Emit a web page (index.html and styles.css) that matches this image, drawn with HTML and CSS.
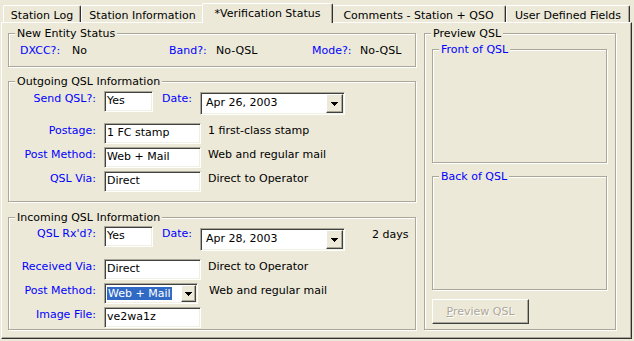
FILE: index.html
```html
<!DOCTYPE html>
<html lang="en">
<head>
<meta charset="UTF-8">
<title>Verification Status</title>
<link rel="stylesheet" href="styles.css">
</head>
<body>

<div class="window">
  <div class="tabs">
    <div class="tab tab-log">Station Log</div>
    <div class="tab tab-info">Station Information</div>
    <div class="tab tab-verify">*Verification Status</div>
    <div class="tab tab-comments">Comments - Station + QSO</div>
    <div class="tab tab-user">User Defined Fields</div>
  </div>

  <div class="panel">
    <div class="left-col">

      <!-- New entity status -->
      <div class="group g-entity">
        <div class="group-title">New Entity Status</div>
        <div class="entity-row">
          <span class="blue">DXCC?:</span><span>No</span>
          <span class="blue">Band?:</span><span>No-QSL</span>
          <span class="blue">Mode?:</span><span>No-QSL</span>
        </div>
      </div>

      <!-- Outgoing -->
      <div class="group g-out">
        <div class="group-title">Outgoing QSL Information</div>
        <div class="form-row first">
          <div class="row-label">Send QSL?:</div>
          <div class="field short">Yes</div>
          <div class="date-label">Date:</div>
          <div class="combo combo-date">
            <div class="combo-text">Apr 26, 2003</div>
            <div class="drop"><svg width="7" height="4" viewBox="0 0 7 4"><path d="M0 0H7V1H6V2H5V3H4V4H3V3H2V2H1V1H0Z"/></svg></div>
          </div>
        </div>
        <div class="form-row second">
          <div class="row-label">Postage:</div>
          <div class="field">1 FC stamp</div>
          <div class="desc">1 first-class stamp</div>
        </div>
        <div class="form-row">
          <div class="row-label">Post Method:</div>
          <div class="field">Web + Mail</div>
          <div class="desc">Web and regular mail</div>
        </div>
        <div class="form-row">
          <div class="row-label">QSL Via:</div>
          <div class="field">Direct</div>
          <div class="desc">Direct to Operator</div>
        </div>
      </div>

      <!-- Incoming -->
      <div class="group g-in">
        <div class="group-title">Incoming QSL Information</div>
        <div class="form-row first in-first">
          <div class="row-label">QSL Rx'd?:</div>
          <div class="field short">Yes</div>
          <div class="date-label">Date:</div>
          <div class="combo combo-date in-date">
            <div class="combo-text">Apr 28, 2003</div>
            <div class="drop"><svg width="7" height="4" viewBox="0 0 7 4"><path d="M0 0H7V1H6V2H5V3H4V4H3V3H2V2H1V1H0Z"/></svg></div>
          </div>
          <div class="days">2 days</div>
        </div>
        <div class="form-row second">
          <div class="row-label">Received Via:</div>
          <div class="field">Direct</div>
          <div class="desc">Direct to Operator</div>
        </div>
        <div class="form-row">
          <div class="row-label">Post Method:</div>
          <div class="combo combo-method">
            <div class="combo-text"><span class="selected">Web + Mail</span></div>
            <div class="drop"><svg width="7" height="4" viewBox="0 0 7 4"><path d="M0 0H7V1H6V2H5V3H4V4H3V3H2V2H1V1H0Z"/></svg></div>
          </div>
          <div class="desc wide">Web and regular mail</div>
        </div>
        <div class="form-row">
          <div class="row-label">Image File:</div>
          <div class="field">ve2wa1z</div>
        </div>
      </div>

    </div>

    <!-- Preview -->
    <div class="group g-preview">
      <div class="group-title">Preview QSL</div>
      <div class="group g-card g-front">
        <div class="group-title blue">Front of QSL</div>
      </div>
      <div class="group g-card g-back">
        <div class="group-title blue">Back of QSL</div>
      </div>
      <button class="btn" disabled><u>P</u>review QSL</button>
    </div>
  </div>
</div>

</body>
</html>
```

FILE: styles.css
```css
body {
  margin: 0;
  background-color: #ece9d8;
  font-family: "DejaVu Sans", Verdana, sans-serif;
  font-size: 11px;
  line-height: 13px;
  color: #000;
}
.window {
  width: 634px;
  height: 341px;
  overflow: hidden;
}
.blue {
  color: #0000ff;
}

/* tabs */
.tabs {
  display: flex;
  align-items: flex-end;
  height: 22px;
  padding-left: 3px;
}
.tab {
  box-sizing: border-box;
  height: 17px;
  padding-top: 3px;
  text-align: center;
  white-space: nowrap;
  border-top: 1px solid #fff;
  border-left: 1px solid #fff;
  border-right: 1px solid #303030;
  border-radius: 2px 2px 0 0;
  box-shadow: inset -1px 0 0 #aca899;
}
.tab-log { width: 78px; }
.tab-info { width: 123px; }
.tab-verify {
  width: 131px;
  height: 20px;
  margin: 0 -2px -1px;
  padding-top: 3px;
  position: relative;
  z-index: 1;
  background-color: #ece9d8;
}
.tab-comments { width: 175px; }
.tab-user { width: 124px; }

/* tab page */
.panel {
  box-sizing: border-box;
  width: 631px;
  height: 317px;
  margin-left: 1px;
  padding: 10px 0 0 6px;
  display: flex;
  gap: 8px;
  border: 1px solid;
  border-color: #fff #303030 #303030 #fff;
  box-shadow: inset -1px -1px 0 #aca899;
}
.left-col {
  width: 408px;
  display: flex;
  flex-direction: column;
}

/* group boxes */
.group {
  box-sizing: border-box;
  border: 1px solid #aca899;
  box-shadow: inset 1px 1px 0 #fff, 1px 1px 0 #fff;
}
.group-title {
  width: fit-content;
  margin: -7px 0 0 6px;
  padding: 0 2px;
  background-color: #ece9d8;
}
.g-entity { height: 34px; }
.g-out { height: 121px; margin-top: 14px; }
.g-in { height: 113px; margin-top: 15px; }

.entity-row {
  display: grid;
  grid-template-columns: 52px 97px 47px 96px 48px auto;
  margin: 4px 0 0 11px;
}

/* form rows */
.form-row {
  display: flex;
  align-items: flex-start;
  margin-top: 3px;
}
.form-row.first { margin-top: 3px; }
.form-row.in-first { margin-top: 2px; }
.form-row.second { margin-top: 8px; }
.row-label {
  width: 87px;
  margin-right: 8px;
  padding-top: 1px;
  text-align: right;
  color: #0000ff;
}
.field {
  box-sizing: border-box;
  width: 97px;
  height: 21px;
  padding: 2px 0 0 2px;
  white-space: nowrap;
  overflow: hidden;
  background-color: #fff;
  border: 1px solid;
  border-color: #aca899 #fff #fff #aca899;
  box-shadow: inset 1px 1px 0 #404040, inset -1px -1px 0 #f1efe2;
}
.field.short { width: 49px; }
.date-label {
  width: 38px;
  margin-left: 9px;
  padding-top: 1px;
  color: #0000ff;
}
.desc {
  margin-left: 7px;
  padding-top: 1px;
}
.desc.wide { margin-left: 11px; }
.days {
  margin-left: 27px;
  padding-top: 2px;
}

/* combo boxes */
.combo {
  box-sizing: border-box;
  display: flex;
  padding: 1px;
  background-color: #fff;
  border: 1px solid;
  border-color: #aca899 #fff #fff #aca899;
  box-shadow: inset 1px 1px 0 #404040, inset -1px -1px 0 #f1efe2;
}
.combo-date {
  width: 145px;
  height: 23px;
  margin-top: 1px;
}
.in-date { margin-top: 2px; }
.combo-method {
  width: 94px;
  height: 21px;
}
.combo-text {
  flex: 1;
  padding: 2px 0 0 4px;
  white-space: nowrap;
}
.combo-method .combo-text { padding: 2px 0 0 1px; }
.selected {
  display: inline-block;
  padding: 0 1px;
  background-color: #316ac5;
  color: #fff;
}
.drop {
  box-sizing: border-box;
  width: 17px;
  display: flex;
  align-items: center;
  justify-content: center;
  background-color: #ece9d8;
  border: 1px solid;
  border-color: #fff #404040 #404040 #fff;
  box-shadow: inset -1px -1px 0 #aca899;
}
.combo-method .drop { width: 15px; }

/* preview */
.g-preview {
  width: 192px;
  height: 297px;
}
.g-card {
  width: 175px;
  height: 114px;
  margin-left: 7px;
}
.g-front { margin-top: 9px; }
.g-back { margin-top: 13px; }
.btn {
  box-sizing: border-box;
  width: 97px;
  height: 25px;
  margin: 9px 0 0 7px;
  padding: 0;
  font-family: inherit;
  font-size: 11px;
  color: #aca899;
  text-shadow: 1px 1px 0 #fff;
  background-color: #ece9d8;
  border: 1px solid;
  border-color: #fff #404040 #404040 #fff;
  box-shadow: inset -1px -1px 0 #aca899;
}
```
